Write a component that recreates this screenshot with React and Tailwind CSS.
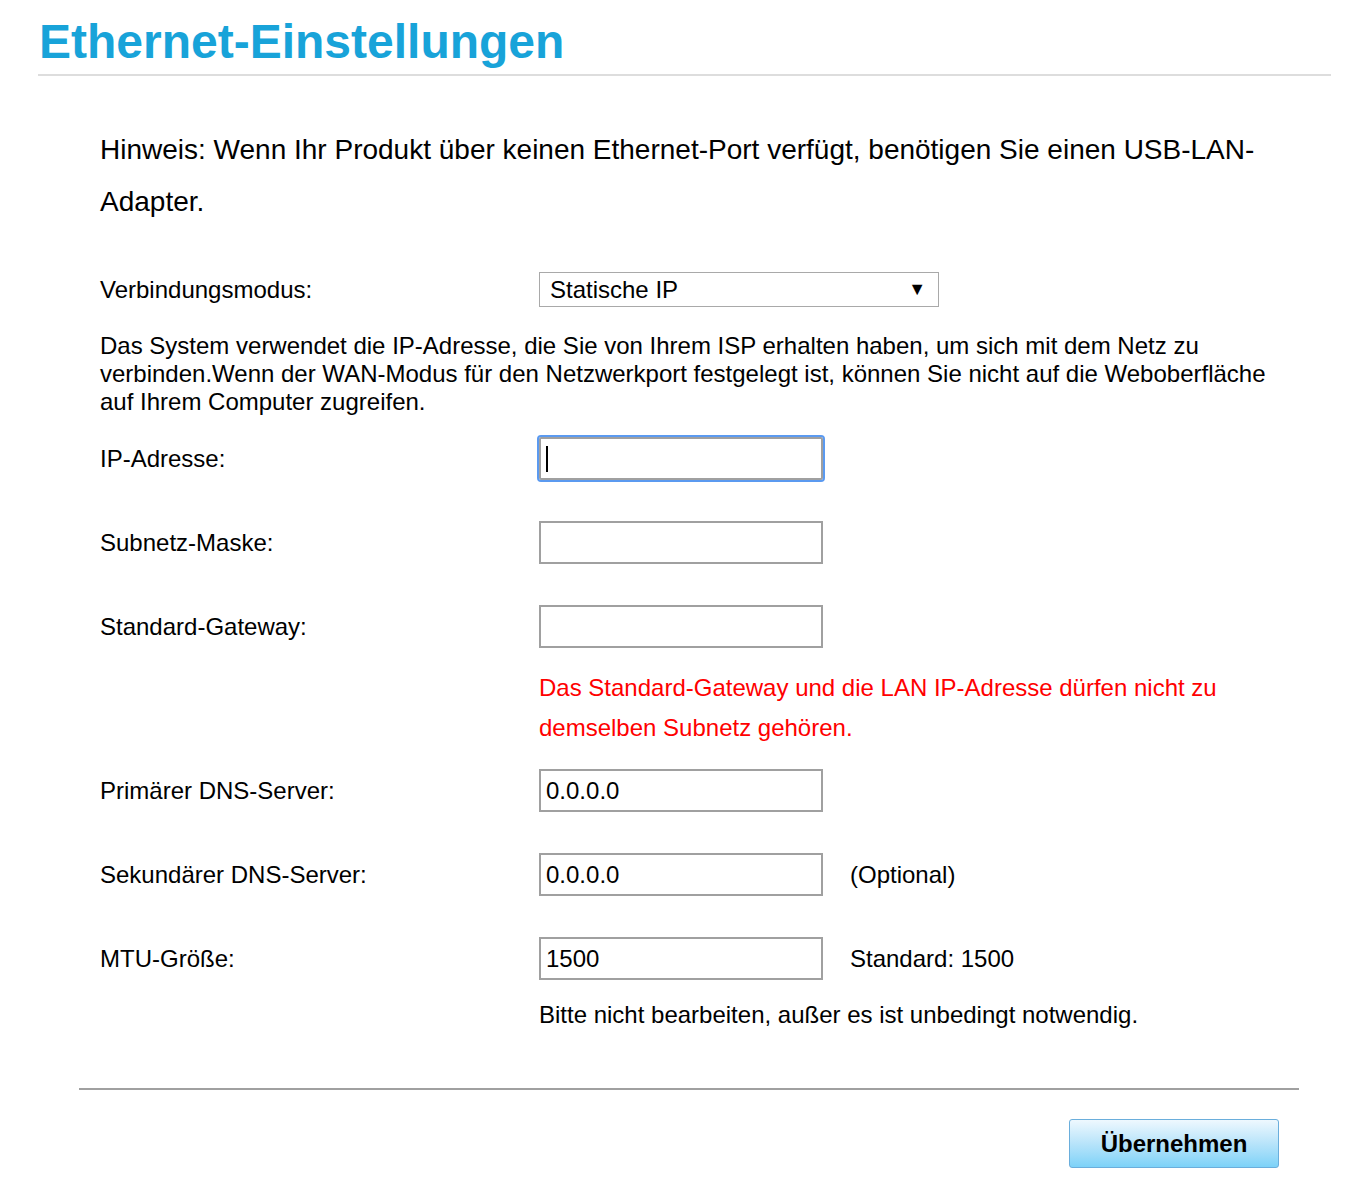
import React from "react";

const font = { fontFamily: '"Liberation Sans", Arial, sans-serif' };

function Row({ label, children, extra }) {
  return (
    <div className="flex items-center h-[43px]">
      <div className="w-[439px] shrink-0">{label}</div>
      {children}
      {extra && <div className="ml-[27px]">{extra}</div>}
    </div>
  );
}

function Input({ value = "", focused = false }) {
  return (
    <div
      className={
        "w-[284px] h-[43px] bg-white flex items-center pl-[5px] " +
        (focused
          ? "border-2 border-[#a0a0a0] outline-2 outline-[#5b9af0] rounded-[2px]"
          : "border-2 border-[#a0a0a0]")
      }
    >
      {focused ? (
        <span className="inline-block w-[2px] h-[26px] bg-black" />
      ) : (
        <span className="leading-none">{value}</span>
      )}
    </div>
  );
}

export default function App() {
  return (
    <div className="min-h-[1184px] bg-white text-black" style={font}>
      <div className="ml-[38px] w-[1293px] pt-[14px]">
        <h1 className="text-[48px] leading-[56px] font-bold text-[#18a3d9] pl-[1px]">
          Ethernet-Einstellungen
        </h1>
        <div className="h-[2px] bg-[#dddddd] mt-[4px]" />
      </div>

      <div className="pl-[100px] pr-[60px] text-[24px]">
        <p className="text-[28px] leading-[52px] mt-[48px]">
          Hinweis: Wenn Ihr Produkt über keinen Ethernet-Port verfügt, benötigen Sie einen USB-LAN-
          <br />
          Adapter.
        </p>

        <div className="flex items-center mt-[44px] h-[35px]">
          <div className="w-[439px] shrink-0">Verbindungsmodus:</div>
          <div className="w-[400px] h-[35px] border border-[#a9a9a9] flex items-center justify-between pl-[10px] pr-[12px]">
            <span>Statische IP</span>
            <span className="text-[18px]">▼</span>
          </div>
        </div>

        <p className="leading-[28px] mt-[25px] w-[1180px]">
          Das System verwendet die IP-Adresse, die Sie von Ihrem ISP erhalten haben, um sich mit dem Netz zu verbinden.Wenn der WAN-Modus für den Netzwerkport festgelegt ist, können Sie nicht auf die Weboberfläche auf Ihrem Computer zugreifen.
        </p>

        <div className="mt-[21px]">
          <Row label="IP-Adresse:">
            <Input focused />
          </Row>
        </div>
        <div className="mt-[41px]">
          <Row label="Subnetz-Maske:">
            <Input />
          </Row>
        </div>
        <div className="mt-[41px]">
          <Row label="Standard-Gateway:">
            <Input />
          </Row>
        </div>

        <div className="ml-[439px] text-[#ff0000] leading-[40px] mt-[20px]">
          Das Standard-Gateway und die LAN IP-Adresse dürfen nicht zu
          <br />
          demselben Subnetz gehören.
        </div>

        <div className="mt-[21px]">
          <Row label="Primärer DNS-Server:">
            <Input value="0.0.0.0" />
          </Row>
        </div>
        <div className="mt-[41px]">
          <Row label="Sekundärer DNS-Server:" extra="(Optional)">
            <Input value="0.0.0.0" />
          </Row>
        </div>
        <div className="mt-[41px]">
          <Row label="MTU-Größe:" extra="Standard: 1500">
            <Input value="1500" />
          </Row>
        </div>

        <div className="ml-[439px] leading-[28px] mt-[21px]">
          Bitte nicht bearbeiten, außer es ist unbedingt notwendig.
        </div>
      </div>

      <div className="ml-[79px] w-[1220px] h-[2px] bg-[#a0a0a0] mt-[59px]" />

      <div className="flex justify-end w-[1279px] mt-[29px]">
        <button className="w-[210px] h-[49px] rounded-[3px] border border-[#6aaedc] bg-gradient-to-b from-[#eef8fe] via-[#b8e4fa] to-[#7cd2f8] text-[24px] font-bold text-black">
          Übernehmen
        </button>
      </div>
    </div>
  );
}
